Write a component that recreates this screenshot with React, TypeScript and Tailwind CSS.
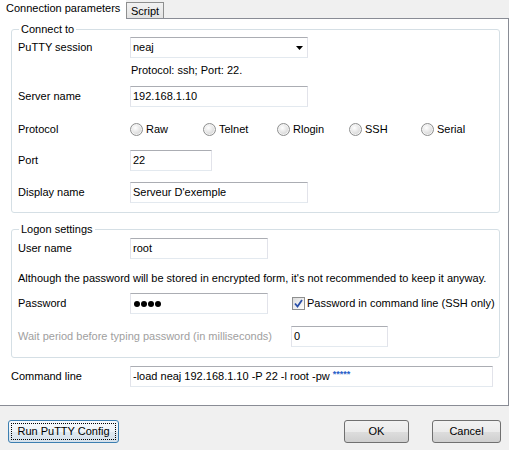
import React from 'react';

const font = "font-['Tahoma','Liberation_Sans',sans-serif]";

const inputCls =
    'h-[21px] bg-white border border-[#e2e3ea] border-t-[#abadb3] border-b-[#e3e9ef] px-[2px] flex items-center text-black';

const Radio: React.FC<{ label: string; width: string }> = ({ label, width }) => (
    <div className={`flex items-center ${width}`}>
        <span className="w-[13px] h-[13px] rounded-full border border-[#8e8f8f] bg-[radial-gradient(circle_at_40%_35%,#ffffff_0%,#e6e6e6_45%,#c4c4c4_100%)] shadow-[inset_0_0_0_1px_#f4f4f4] mr-[3px]" />
        <span>{label}</span>
    </div>
);

const Group: React.FC<{ title: string; className: string; children: React.ReactNode }> = ({
    title,
    className,
    children,
}) => (
    <div className={`relative ml-[11px] w-[489px] border border-[#d5dfe5] rounded-[3px] pl-[6px] ${className}`}>
        <span className="absolute left-[7px] -top-[7px] px-[2px] bg-white leading-[13px]">{title}</span>
        {children}
    </div>
);

const Button: React.FC<{ label: string; className: string; focused?: boolean }> = ({ label, className, focused }) => (
    <div
        className={`h-[23px] rounded-[3px] border flex items-center justify-center p-[2px] ${
            focused
                ? 'border-[#3c7fb1] bg-[linear-gradient(#f6f9fc_0%,#edf2f7_50%,#dfe8f0_51%,#d6e1eb_100%)]'
                : 'border-[#707070] bg-[linear-gradient(#f2f2f2_0%,#ebebeb_50%,#dddddd_51%,#cfcfcf_100%)]'
        } ${className}`}
    >
        <div
            className={`w-full h-full flex items-center justify-center ${
                focused ? 'border border-dotted border-black' : ''
            }`}
        >
            {label}
        </div>
    </div>
);

export default function App() {
    return (
        <div className={`w-[509px] h-[450px] bg-[#f0f0f0] text-[11px] text-black ${font} leading-none`}>
            {/* Tabs */}
            <div className="flex h-[18px] items-end">
                <div className="relative z-10 w-[126px] h-[19px] -mb-px bg-white pl-[6px] pt-[2px] leading-[13px]">
                    Connection parameters
                </div>
                <div className="w-[38px] h-[16px] border border-b-0 border-[#8e8f8f] bg-[linear-gradient(#f2f2f2,#e3e3e3)] pl-[4px] pt-[2px] leading-[13px]">
                    Script
                </div>
            </div>

            {/* Pane */}
            <div className="h-[388px] bg-white border-t border-r border-b border-[#898c95] pt-[10px]">
                <Group title="Connect to" className="h-[184px]">
                    <div className="flex items-center h-[21px] mt-[7px]">
                        <span className="w-[112px]">PuTTY session</span>
                        <div className={`${inputCls} w-[178px] justify-between pr-[4px]`}>
                            <span>neaj</span>
                            <svg width="7" height="4" viewBox="0 0 7 4">
                                <path d="M0 0h7L3.5 4z" fill="#000" />
                            </svg>
                        </div>
                    </div>
                    <div className="h-[14px] mt-[5px] pl-[113px] flex items-center">Protocol: ssh; Port: 22.</div>
                    <div className="flex items-center h-[21px] mt-[9px]">
                        <span className="w-[112px]">Server name</span>
                        <div className={`${inputCls} w-[178px]`}>192.168.1.10</div>
                    </div>
                    <div className="flex items-center h-[21px] mt-[12px]">
                        <span className="w-[112px]">Protocol</span>
                        <Radio label="Raw" width="w-[73px]" />
                        <Radio label="Telnet" width="w-[74px]" />
                        <Radio label="Rlogin" width="w-[72px]" />
                        <Radio label="SSH" width="w-[72px]" />
                        <Radio label="Serial" width="w-[70px]" />
                    </div>
                    <div className="flex items-center h-[21px] mt-[10px]">
                        <span className="w-[112px]">Port</span>
                        <div className={`${inputCls} w-[82px]`}>22</div>
                    </div>
                    <div className="flex items-center h-[21px] mt-[11px]">
                        <span className="w-[112px]">Display name</span>
                        <div className={`${inputCls} w-[178px]`}>Serveur D'exemple</div>
                    </div>
                </Group>

                <Group title="Logon settings" className="h-[129px] mt-[16px]">
                    <div className="flex items-center h-[21px] mt-[8px]">
                        <span className="w-[112px]">User name</span>
                        <div className={`${inputCls} w-[138px]`}>root</div>
                    </div>
                    <div className="h-[14px] mt-[12px] flex items-center">
                        Although the password will be stored in encrypted form, it's not recommended to keep it anyway.
                    </div>
                    <div className="flex items-center h-[21px] mt-[8px]">
                        <span className="w-[112px]">Password</span>
                        <div className={`${inputCls} w-[138px] gap-[1px] pl-[3px]`}>
                            {[0, 1, 2, 3].map((i) => (
                                <span key={i} className="w-[6px] h-[6px] rounded-full bg-black" />
                            ))}
                        </div>
                        <div className="flex items-center ml-[24px]">
                            <span className="w-[13px] h-[13px] border border-[#8e8f8f] bg-[linear-gradient(135deg,#dcdcdc,#ffffff)] flex items-center justify-center mr-[2px]">
                                <svg width="9" height="9" viewBox="0 0 9 9">
                                    <path d="M1 4.5l2.5 3L8 1" stroke="#2a4fa8" strokeWidth="1.8" fill="none" />
                                </svg>
                            </span>
                            <span>Password in command line (SSH only)</span>
                        </div>
                    </div>
                    <div className="flex items-center h-[21px] mt-[12px]">
                        <span className="w-[273px] text-[#a0a0a0]">Wait period before typing password (in milliseconds)</span>
                        <div className={`${inputCls} w-[97px] text-[#6d6d6d]`}>0</div>
                    </div>
                </Group>

                <div className="flex items-center h-[21px] mt-[8px] pl-[11px]">
                    <span className="w-[119px]">Command line</span>
                    <div className={`${inputCls} w-[363px] whitespace-pre`}>
                        <span>-load neaj 192.168.1.10 -P 22 -l root -pw </span>
                        <span className="text-[#2860c8] text-[9px] font-bold -mt-[4px]">*****</span>
                    </div>
                </div>
            </div>

            {/* Buttons */}
            <div className="flex mt-[14px]">
                <Button label="Run PuTTY Config" focused className="ml-[8px] w-[111px]" />
                <Button label="OK" className="ml-[225px] w-[65px]" />
                <Button label="Cancel" className="ml-[23px] w-[69px]" />
            </div>
        </div>
    );
}
